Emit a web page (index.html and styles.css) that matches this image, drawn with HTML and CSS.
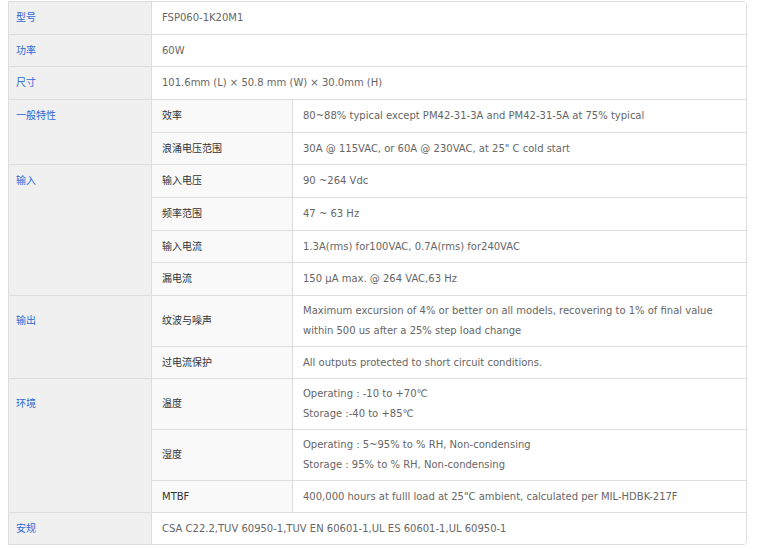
FILE: index.html
```html
<!DOCTYPE html>
<html lang="zh">
<head>
<meta charset="utf-8">
<title>FSP060-1K20M1</title>
<link rel="stylesheet" href="styles.css">
</head>
<body>
<div class="spec">
<table class="spec-table">
<colgroup><col class="c1"><col class="c2"><col class="c3"></colgroup>
<tbody>
<tr><th class="k">型号</th><td class="v" colspan="2">FSP060-1K20M1</td></tr>
<tr><th class="k">功率</th><td class="v" colspan="2">60W</td></tr>
<tr><th class="k">尺寸</th><td class="v" colspan="2">101.6mm (L) × 50.8 mm (W) × 30.0mm (H)</td></tr>
<tr><th class="k" rowspan="2">一般特性</th><td class="s">效率</td><td class="v">80~88% typical except PM42-31-3A and PM42-31-5A at 75% typical</td></tr>
<tr><td class="s">浪涌电压范围</td><td class="v">30A @ 115VAC, or 60A @ 230VAC, at 25" C cold start</td></tr>
<tr><th class="k" rowspan="4">输入</th><td class="s">输入电压</td><td class="v">90 ~264 Vdc</td></tr>
<tr><td class="s">频率范围</td><td class="v">47 ~ 63 Hz</td></tr>
<tr><td class="s">输入电流</td><td class="v">1.3A(rms) for100VAC, 0.7A(rms) for240VAC</td></tr>
<tr><td class="s">漏电流</td><td class="v">150 μA max. @ 264 VAC,63 Hz</td></tr>
<tr><th class="k k-tall" rowspan="2">输出</th><td class="s">纹波与噪声</td><td class="v multi"><div class="ln">Maximum excursion of 4% or better on all models, recovering to 1% of final value</div><div class="ln">within 500 us after a 25% step load change</div></td></tr>
<tr class="short"><td class="s">过电流保护</td><td class="v">All outputs protected to short circuit conditions.</td></tr>
<tr><th class="k k-tall" rowspan="3">环境</th><td class="s">温度</td><td class="v multi"><div class="ln">Operating : -10 to +70℃</div><div class="ln">Storage :-40 to +85℃</div></td></tr>
<tr><td class="s">湿度</td><td class="v multi"><div class="ln">Operating : 5~95% to % RH, Non-condensing</div><div class="ln">Storage : 95% to % RH, Non-condensing</div></td></tr>
<tr class="short"><td class="s">MTBF</td><td class="v">400,000 hours at fulll load at 25"C ambient, calculated per MIL-HDBK-217F</td></tr>
<tr class="short last"><th class="k">安规</th><td class="v" colspan="2">CSA C22.2,TUV 60950-1,TUV EN 60601-1,UL ES 60601-1,UL 60950-1</td></tr>
</tbody>
</table>
</div>
</body>
</html>
```
FILE: styles.css
```css
html, body {
  margin: 0;
  padding: 0;
  background: #ffffff;
}
body {
  padding: 1px 0 0 8px;
  font-family: "DejaVu Sans", "Noto Sans CJK SC", sans-serif;
  font-size: 10px;
}
.spec {
  width: 739px;
  box-sizing: border-box;
  border: 1px solid #dddddd;
  border-radius: 0 4px 4px 0;
  overflow: hidden;
}
.spec-table {
  width: 737px;
  table-layout: fixed;
  border-collapse: separate;
  border-spacing: 0;
}
.c1 { width: 143px; }
.c2 { width: 141px; }
.c3 { width: 453px; }
.spec-table th,
.spec-table td {
  padding: 5px 10px;
  line-height: 21.67px;
  border-right: 1px solid #dddddd;
  border-bottom: 1px solid #dddddd;
  text-align: left;
  font-weight: normal;
  white-space: nowrap;
}
.spec-table tr.short th,
.spec-table tr.short td {
  line-height: 21px;
}
.spec-table tr.last th,
.spec-table tr.last td {
  border-bottom: 0;
}
.spec-table .v {
  border-right: 0;
  background: #ffffff;
  color: #666666;
  vertical-align: middle;
}
.spec-table .k {
  padding-left: 7px;
  background: #f0f0f0;
  color: #2b6ad6;
  vertical-align: top;
}
.spec-table .k-tall {
  padding-top: 14px;
}
.spec-table .s {
  background: #f9f9f9;
  color: #333333;
  vertical-align: middle;
}
.spec-table .multi {
  padding-top: 5px;
  padding-bottom: 5px;
}
.ln {
  line-height: 20px;
}
```
